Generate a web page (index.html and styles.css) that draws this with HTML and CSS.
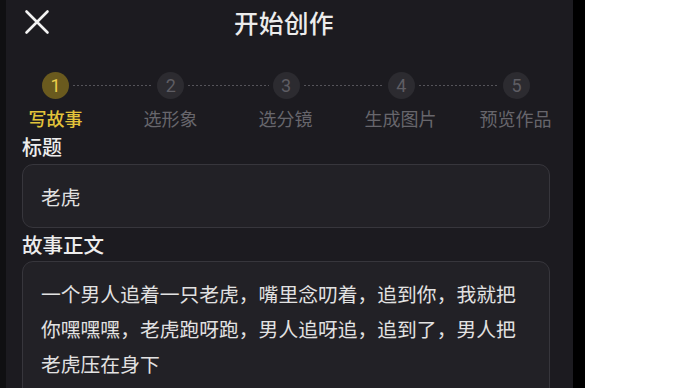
FILE: index.html
```html
<!DOCTYPE html>
<html lang="zh-CN">
<head>
<meta charset="utf-8">
<title>开始创作</title>
<link rel="stylesheet" href="styles.css">
</head>
<body>
<div class="page">
  <div class="edge-left"></div>
  <div class="screen">
    <header class="topbar">
      <svg class="close" width="26" height="26" viewBox="0 0 26 26" aria-hidden="true">
        <path d="M2.5 2.5 L23.5 23.5 M23.5 2.5 L2.5 23.5" stroke="#f2f2f2" stroke-width="2.6" stroke-linecap="round" fill="none"/>
      </svg>
      <h1 class="title">开始创作</h1>
    </header>

    <div class="stepper">
      <span class="dot active">1</span>
      <span class="link"></span>
      <span class="dot">2</span>
      <span class="link"></span>
      <span class="dot">3</span>
      <span class="link"></span>
      <span class="dot">4</span>
      <span class="link"></span>
      <span class="dot">5</span>
    </div>
    <div class="step-labels">
      <span class="active">写故事</span>
      <span>选形象</span>
      <span>选分镜</span>
      <span>生成图片</span>
      <span>预览作品</span>
    </div>

    <form class="form">
      <div class="label label-title">标题</div>
      <div class="field">老虎</div>
      <div class="label label-body">故事正文</div>
      <div class="field area">一个男人追着一只老虎，嘴里念叨着，追到你，我就把你嘿嘿嘿，老虎跑呀跑，男人追呀追，追到了，男人把老虎压在身下</div>
    </form>
  </div>
  <div class="edge-right"></div>
  <div class="blank"></div>
</div>
</body>
</html>
```

FILE: styles.css
```css
* { box-sizing: border-box; }
html, body { margin: 0; padding: 0; background: #ffffff; }
body {
  font-family: "Noto Sans CJK SC", "Noto Sans", sans-serif;
  width: 686px;
  height: 388px;
  overflow: hidden;
}
.page {
  display: flex;
  height: 388px;
}
.edge-left { width: 6px; background: #101012; flex: none; }
.edge-right { width: 12px; background: #000000; flex: none; }
.blank { flex: 1; background: #ffffff; }
.screen {
  width: 567px;
  flex: none;
  background: #1c1b20;
  overflow: hidden;
}
.topbar {
  height: 46px;
  display: flex;
  align-items: center;
  padding: 0 0 0 18px;
}
.close { flex: none; margin-top: -2px; }
.title {
  flex: 1;
  margin: 0;
  text-align: center;
  font-size: 24.5px;
  font-weight: 500;
  color: #ececec;
  padding-right: 55px;
  line-height: 30px;
  letter-spacing: 0.5px;
}
.stepper {
  margin: 26px 0 0 36px;
  width: 488px;
  display: flex;
  align-items: center;
}
.dot {
  width: 27px;
  height: 27px;
  border-radius: 50%;
  background: #2c2b30;
  color: #5e5d63;
  font-family: "Roboto", "Noto Sans", sans-serif;
  font-size: 18px;
  line-height: 27px;
  text-align: center;
  flex: none;
}
.dot.active {
  background: #6a5a1e;
  color: #ecd04c;
}
.link {
  flex: 1;
  height: 1px;
  margin: 0 4px;
  background: repeating-linear-gradient(90deg, #55545a 0 2px, transparent 2px 4px);
}
.step-labels {
  margin: 8px 0 0 -8px;
  display: grid;
  grid-template-columns: repeat(5, 115px);
  font-size: 18px;
  line-height: 22px;
  color: #67666c;
  text-align: center;
}
.step-labels .active { color: #e3c43a; font-weight: 500; }
.form {
  padding: 0 23px 0 16px;
  margin: 0;
}
.label {
  color: #ededed;
  line-height: 22px;
  font-weight: 500;
}
.label-title { font-size: 20px; margin-top: 7px; }
.label-body { font-size: 20.5px; margin-top: 5px; }
.field {
  margin-top: 6px;
  background: #222126;
  border: 1.5px solid #37363c;
  border-radius: 11px;
  color: #e2e2e2;
  font-size: 19.8px;
  height: 64px;
  padding: 0 18px;
  display: flex;
  align-items: center;
}
.field.area {
  display: block;
  height: 160px;
  padding: 14px 28px 14px 18px;
  line-height: 35px;
}
```
